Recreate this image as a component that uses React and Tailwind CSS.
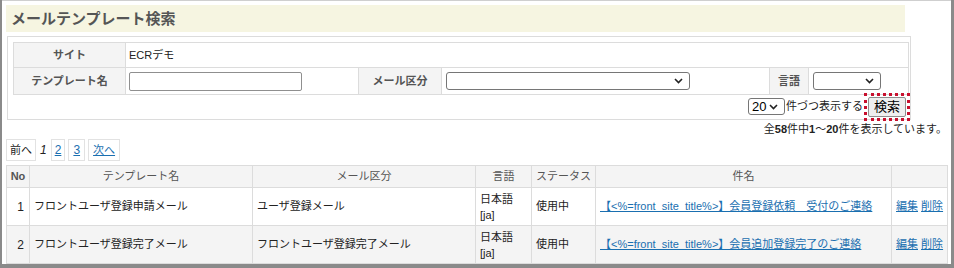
import React from 'react';

const font = { fontFamily: '"Liberation Sans", "Noto Sans CJK JP", sans-serif' };

function Chevron() {
  return (
    <svg width="9" height="6" viewBox="0 0 9 6" className="shrink-0">
      <path d="M1 1l3.5 3.5L8 1" fill="none" stroke="#222" strokeWidth="1.6" />
    </svg>
  );
}

function FakeSelect({ className, value }) {
  return (
    <div className={`shrink-0 flex items-center justify-between border border-[#767676] rounded-[3px] bg-white pl-[3px] pr-[6px] ${className}`}>
      <span className="text-[13px] leading-none text-black">{value}</span>
      <Chevron />
    </div>
  );
}

const rows = [
  {
    no: 1,
    name: 'フロントユーザ登録申請メール',
    kind: 'ユーザ登録メール',
    subject: '【<%=front_site_title%>】会員登録依頼　受付のご連絡',
    bg: 'bg-white',
  },
  {
    no: 2,
    name: 'フロントユーザ登録完了メール',
    kind: 'フロントユーザ登録完了メール',
    subject: '【<%=front_site_title%>】会員追加登録完了のご連絡',
    bg: 'bg-[#f4f4f4]',
  },
];

export default function App() {
  const label = 'bg-[#f4f4f4] border border-[#dcdcdc] text-center text-[11px] font-bold text-[#555]';
  const cell = 'border border-[#dcdcdc] bg-white';
  const th = 'border border-[#dcdcdc] bg-[#f4f4f4] text-[11px] text-[#555] whitespace-nowrap';
  const td = 'border border-[#dcdcdc] text-[11px] text-[#222] align-middle whitespace-nowrap';

  return (
    <div style={font} className="w-[954px] h-[268px] overflow-hidden bg-[#8a8a8a]">
      <div className="h-[264px] ml-[2px] mr-[3px] bg-white border-t border-[#cfcfcf] overflow-hidden">
        {/* Title */}
        <div className="ml-[4px] mt-[4px] w-[899px] h-[27px] bg-[#f6f5e1] flex items-center pl-[5px]">
          <h1 className="text-[15px] font-bold text-[#555] leading-none">メールテンプレート検索</h1>
        </div>

        {/* Search box */}
        <div className="ml-[5px] mt-[4px] w-[904px] h-[84px] border border-[#dcdcdc] pt-[5px] pl-[5px]">
          <table className="border-collapse table-fixed w-[895px]">
            <colgroup>
              <col className="w-[112px]" />
              <col className="w-[233px]" />
              <col className="w-[83px]" />
              <col className="w-[328px]" />
              <col className="w-[39px]" />
              <col className="w-[100px]" />
            </colgroup>
            <tbody>
              <tr className="h-[25px]">
                <td className={label}>サイト</td>
                <td colSpan={5} className={`${cell} pl-[3px] text-[11px] text-[#222]`}>ECRデモ</td>
              </tr>
              <tr className="h-[27px]">
                <td className={label}>テンプレート名</td>
                <td className={`${cell} pl-[3px]`}>
                  <div className="w-[173px] h-[19px] border border-[#8f8f8f] rounded-[2px]" />
                </td>
                <td className={label}>メール区分</td>
                <td className={`${cell} pl-[4px]`}>
                  <FakeSelect className="w-[244px] h-[18px]" value="" />
                </td>
                <td className={label}>言語</td>
                <td className={`${cell} pl-[4px]`}>
                  <FakeSelect className="w-[68px] h-[18px]" value="" />
                </td>
              </tr>
            </tbody>
          </table>
          <div className="flex items-center justify-end h-[23px] mr-[4px] text-[11px] text-[#222]">
            <FakeSelect className="w-[37px] h-[17px]" value="20" />
            <span className="ml-[1px]">件づつ表示する</span>
            <div className="ml-[1px] p-[1px] border-[3px] border-dotted border-[#c8102e] -mr-[4px]">
              <div className="h-[20px] px-[5px] flex items-center bg-[#efefef] border border-[#8f8f8f] rounded-[2px] text-[13px] text-black">
                検索
              </div>
            </div>
          </div>
        </div>

        <div className="w-[945px] text-right text-[11px] text-[#222] mt-[1px] leading-[16px]">
          全<b>58</b>件中<b>1</b>〜<b>20</b>件を表示しています。
        </div>

        {/* Pager */}
        <div className="flex items-center ml-[4px] mt-[2px] h-[22px] text-[12px] gap-[3px]">
          <span className="h-[22px] px-[3px] flex items-center border border-[#e2e2e2] text-[#222] text-[11px]">前へ</span>
          <span className="px-[1px] italic text-[#222]">1</span>
          <a className="h-[22px] px-[3px] flex items-center border border-[#e2e2e2] text-[#1a6fb0] underline">2</a>
          <a className="h-[22px] px-[4px] flex items-center border border-[#e2e2e2] text-[#1a6fb0] underline">3</a>
          <a className="h-[22px] px-[4px] flex items-center border border-[#e2e2e2] text-[#1a6fb0] underline text-[11px]">次へ</a>
        </div>

        {/* Result table */}
        <table className="border-collapse table-fixed w-[941px] ml-[4px] mt-[4px]">
          <colgroup>
            <col className="w-[23px]" />
            <col className="w-[223px]" />
            <col className="w-[223px]" />
            <col className="w-[56px]" />
            <col className="w-[64px]" />
            <col className="w-[296px]" />
            <col className="w-[56px]" />
          </colgroup>
          <thead>
            <tr className="h-[22px]">
              <th className={`${th} font-bold`}>No</th>
              <th className={`${th} font-normal`}>テンプレート名</th>
              <th className={`${th} font-normal`}>メール区分</th>
              <th className={`${th} font-normal`}>言語</th>
              <th className={`${th} font-normal`}>ステータス</th>
              <th className={`${th} font-normal`}>件名</th>
              <th className={th}></th>
            </tr>
          </thead>
          <tbody>
            {rows.map((r) => (
              <tr key={r.no} className={`h-[38px] ${r.bg}`}>
                <td className={`${td} text-right pr-[5px] text-[12px]`}>{r.no}</td>
                <td className={`${td} pl-[4px]`}>{r.name}</td>
                <td className={`${td} pl-[4px]`}>{r.kind}</td>
                <td className={`${td} pl-[4px] leading-[16px]`}>
                  日本語<br />[ja]
                </td>
                <td className={`${td} pl-[4px]`}>使用中</td>
                <td className={`${td} pl-[4px]`}>
                  <a className="text-[#1a6fb0] underline">{r.subject}</a>
                </td>
                <td className={`${td} pl-[4px]`}>
                  <a className="text-[#1a6fb0] underline">編集</a>{' '}
                  <a className="text-[#1a6fb0] underline">削除</a>
                </td>
              </tr>
            ))}
            <tr className="h-[38px] bg-white">
              <td className={td}></td>
              <td className={td}></td>
              <td className={td}></td>
              <td className={td}></td>
              <td className={td}></td>
              <td className={td}></td>
              <td className={td}></td>
            </tr>
          </tbody>
        </table>
      </div>
    </div>
  );
}
